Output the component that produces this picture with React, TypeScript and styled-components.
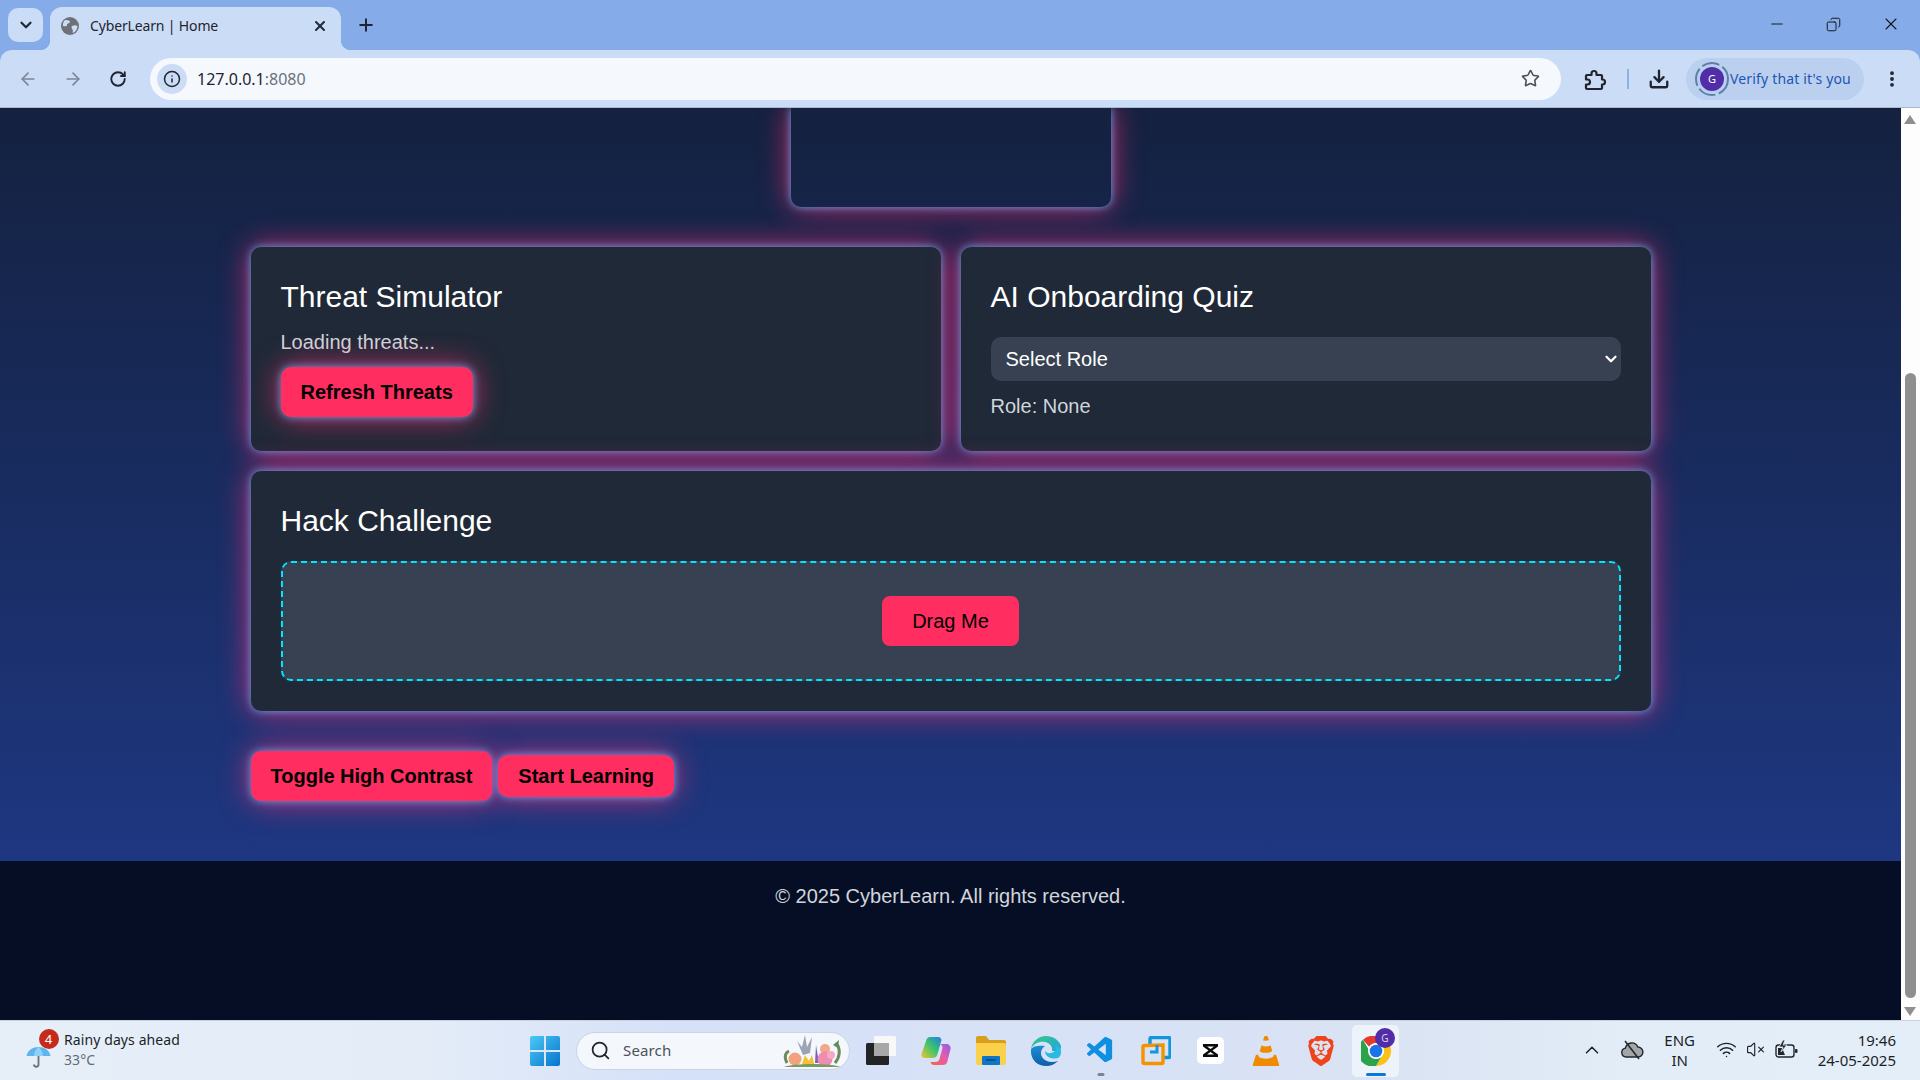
import React from "react";
import styled, { createGlobalStyle } from "styled-components";
import {
  ArrowLeft,
  ArrowRight,
  ChevronDown,
  ChevronUp,
  Copy,
  Download,
  EllipsisVertical,
  Info,
  Minus,
  Plus,
  RotateCw,
  Search,
  Star,
  VolumeX,
  Wifi,
  X,
} from "lucide-react";
import { VscVscode } from "react-icons/vsc";
import { SiBrave, SiVlcmediaplayer } from "react-icons/si";

const UI_FONT = `"Noto Sans", "Liberation Sans", sans-serif`;
const PAGE_FONT = `"Liberation Sans", Arial, sans-serif`;

const GlobalStyle = createGlobalStyle`
  html, body {
    margin: 0;
    padding: 0;
    height: 100%;
    overflow: hidden;
  }
  * {
    box-sizing: border-box;
  }
`;

const Screen = styled.div`
  width: 1920px;
  height: 1080px;
  display: flex;
  flex-direction: column;
  font-family: ${UI_FONT};
  overflow: hidden;
`;

/* browser chrome */

const TabStrip = styled.div`
  height: 50px;
  flex: none;
  background: #85ace9;
  display: flex;
  align-items: flex-end;
  padding-left: 8px;
`;

const TabListButton = styled.div`
  width: 35px;
  height: 34px;
  margin-bottom: 8px;
  border-radius: 10px;
  background: #cbdcf6;
  display: flex;
  align-items: center;
  justify-content: center;
  color: #1f2937;
`;

const Tab = styled.div`
  position: relative;
  width: 291px;
  height: 43px;
  margin-left: 7px;
  background: #cbdcf6;
  border-radius: 12px 12px 0 0;
  display: flex;
  align-items: center;
  padding: 0 13px 6px 11px;
  color: #1f2937;

  &::before,
  &::after {
    content: "";
    position: absolute;
    bottom: 0;
    width: 10px;
    height: 10px;
  }
  &::before {
    left: -10px;
    background: radial-gradient(circle at 0 0, transparent 10px, #cbdcf6 10.5px);
  }
  &::after {
    right: -10px;
    background: radial-gradient(circle at 100% 0, transparent 10px, #cbdcf6 10.5px);
  }
`;

const TabTitle = styled.span`
  flex: 1;
  margin-left: 11px;
  font-size: 14px;
  letter-spacing: -0.15px;
  color: #1f2430;
`;

const NewTab = styled.div`
  margin: 0 0 8px 8px;
  width: 34px;
  height: 34px;
  display: flex;
  align-items: center;
  justify-content: center;
  color: #1f2430;
`;

const WindowControls = styled.div`
  margin-left: auto;
  align-self: flex-start;
  display: flex;
  height: 48px;
  color: #14181f;
`;

const WindowButton = styled.div<{ $w: number }>`
  width: ${(p) => p.$w}px;
  display: flex;
  align-items: center;
  justify-content: center;
`;

const Toolbar = styled.div`
  height: 58px;
  flex: none;
  background: #85ace9;
  border-bottom: 1px solid #a9b9d2;
`;

const ToolbarInner = styled.div`
  height: 57px;
  background: #cbdcf6;
  border-radius: 12px 12px 0 0;
  display: flex;
  align-items: center;
  padding-left: 5px;
`;

const ToolSlot = styled.div<{ $w?: number; $dim?: boolean }>`
  width: ${(p) => p.$w ?? 45}px;
  height: 42px;
  flex: none;
  display: flex;
  align-items: center;
  justify-content: center;
  color: ${(p) => (p.$dim ? "#7d8794" : "#1f2430")};
`;

const AddressBar = styled.div`
  width: 1411px;
  height: 42px;
  margin: 0 9px 0 10px;
  flex: none;
  border-radius: 21px;
  background: #f5f8fd;
  display: flex;
  align-items: center;
  padding: 0 21px 0 7px;
  font-size: 16px;
`;

const InfoChip = styled.div`
  width: 30px;
  height: 30px;
  border-radius: 50%;
  background: #cbdcf6;
  display: flex;
  align-items: center;
  justify-content: center;
  color: #1f2430;
`;

const Host = styled.span`
  margin-left: 10px;
  color: #1f2430;
`;

const Port = styled.span`
  color: #6b7280;
  flex: 1;
`;

const ToolSeparator = styled.div`
  width: 2px;
  height: 20px;
  flex: none;
  margin: 0 12px 0 7px;
  background: #8db2e8;
`;

const VerifyChip = styled.div`
  width: 178px;
  height: 42px;
  margin-left: 9px;
  flex: none;
  border-radius: 21px;
  background: #bbd0ef;
  display: flex;
  align-items: center;
  padding-left: 8px;
  color: #1d55b3;
  font-size: 14px;
  letter-spacing: 0.17px;
`;

/* page */

const Viewport = styled.div`
  flex: 1;
  min-height: 0;
  display: flex;
`;

const PageArea = styled.div`
  flex: 1;
  min-width: 0;
  display: flex;
  flex-direction: column;
  overflow: hidden;
  font-family: ${PAGE_FONT};
  font-size: 20px;
`;

const Main = styled.main`
  flex: 1;
  background: linear-gradient(to bottom, #14213f 0%, #1e3781 100%);
  display: flex;
  flex-direction: column;
  align-items: center;
`;

const glow = `0 0 8px rgba(90, 185, 255, 0.85), 0 0 30px rgba(255, 45, 117, 0.8)`;

const HeroFrame = styled.div`
  width: 320px;
  height: 99px;
  flex: none;
  margin-bottom: 40px;
  border-radius: 0 0 10px 10px;
  box-shadow: ${glow};
`;

const Container = styled.div`
  width: 1400px;
  display: flex;
  flex-direction: column;
  gap: 20px;
`;

const CardRow = styled.div`
  display: grid;
  grid-template-columns: 1fr 1fr;
  gap: 20px;
`;

const Card = styled.section`
  background: #1f2937;
  border-radius: 10px;
  padding: 30px;
  box-shadow: ${glow};
`;

const CardTitle = styled.h2`
  margin: 2px 0 0;
  font-size: 30px;
  line-height: 36px;
  font-weight: 400;
  color: #fff;
`;

const CardText = styled.p<{ $top: number; $bottom?: number }>`
  margin: ${(p) => p.$top}px 0 ${(p) => p.$bottom ?? 0}px;
  line-height: 25px;
  color: #d1d5db;
`;

const GlowButton = styled.button<{ $tall?: boolean }>`
  height: ${(p) => (p.$tall ? 50 : 42)}px;
  padding: 0 20px;
  border: 0;
  border-radius: 10px;
  background: #ff2d60;
  color: #000;
  font-family: ${PAGE_FONT};
  font-size: 20px;
  font-weight: 700;
  box-shadow: ${glow};
`;

const CardAction = styled.div`
  margin: 12px 0 4px;
`;

const RoleSelect = styled.div`
  margin-top: 22px;
  height: 44px;
  border-radius: 10px;
  background: #374151;
  color: #fff;
  display: flex;
  align-items: center;
  justify-content: space-between;
  padding: 0 1px 0 15px;
`;

const DropZone = styled.div`
  margin-top: 22px;
  height: 120px;
  border: 2px dashed #00e5ff;
  border-radius: 10px;
  background: #374151;
  display: flex;
  align-items: center;
  justify-content: center;
`;

const DragChip = styled.div`
  width: 137px;
  height: 50px;
  border-radius: 8px;
  background: #ff2d60;
  color: #000;
  display: flex;
  align-items: center;
  justify-content: center;
`;

const ActionRow = styled.div`
  display: flex;
  align-items: center;
  gap: 6px;
  margin-top: 20px;
`;

const Footer = styled.footer`
  height: 159px;
  flex: none;
  background: #060e26;
  color: #d1d5db;
  text-align: center;
  padding-top: 23px;
  line-height: 25px;
`;

const Scrollbar = styled.div`
  width: 19px;
  flex: none;
  background: #fdfdfd;
  position: relative;
`;

const ScrollThumb = styled.div`
  position: absolute;
  left: 4px;
  top: 265px;
  width: 11px;
  height: 625px;
  border-radius: 6px;
  background: #8f8f8f;
`;

const ScrollArrow = styled.div<{ $down?: boolean }>`
  position: absolute;
  left: 3px;
  ${(p) => (p.$down ? "bottom: 4px;" : "top: 7px;")}
  width: 0;
  height: 0;
  border-left: 6.5px solid transparent;
  border-right: 6.5px solid transparent;
  ${(p) => (p.$down ? "border-top: 9px solid #8f8f8f;" : "border-bottom: 9px solid #8f8f8f;")}
`;

/* taskbar */

const Taskbar = styled.div`
  height: 60px;
  flex: none;
  border-top: 1px solid #c8d1dc;
  background: linear-gradient(to right, #e6eff8 0%, #e4ecf8 22%, #d5e1f8 35%, #d8e2f6 60%, #d9e3f3 72%, #e2edf7 85%, #e4eef8 100%);
  display: flex;
  align-items: center;
  color: #1b1f27;
`;

const Weather = styled.div`
  width: 528px;
  flex: none;
  display: flex;
  align-items: center;
  padding-left: 26px;
`;

const WeatherIcon = styled.div`
  position: relative;
  width: 38px;
  height: 44px;
  padding-bottom: 4px;
  display: flex;
  align-items: flex-end;
`;

const Badge = styled.span`
  position: absolute;
  top: 0;
  left: 12.5px;
  width: 20px;
  height: 20px;
  border-radius: 50%;
  background: #c42b1c;
  color: #fff;
  font-size: 13px;
  display: flex;
  align-items: center;
  justify-content: center;
`;

const WeatherLines = styled.div`
  padding-bottom: 2px;
  font-size: 14px;
  line-height: 20px;
  letter-spacing: 0.1px;
`;

const Muted = styled.div`
  color: #5f6b76;
`;

const Dock = styled.div`
  display: flex;
  align-items: center;
`;

const StartSlot = styled.div`
  width: 48px;
  display: flex;
  justify-content: flex-start;
  padding-left: 2px;
`;

const SearchPill = styled.div`
  position: relative;
  width: 274px;
  height: 38px;
  margin-right: 3px;
  border-radius: 19px;
  background: #f4f7fc;
  border: 1px solid #c9d4e4;
  display: flex;
  align-items: center;
  padding-left: 13px;
  color: #1f2430;
  font-size: 15px;
  letter-spacing: 0.15px;
`;

const SearchText = styled.span`
  margin: 0 0 2px 12px;
  color: #4b5058;
`;

const DockSlot = styled.div<{ $active?: boolean }>`
  position: relative;
  width: 55px;
  height: 52px;
  flex: none;
  display: flex;
  align-items: center;
  justify-content: center;
  ${(p) => p.$active && "background: rgba(255, 255, 255, 0.55); border-radius: 5px; width: 47px; margin-left: 4px;"}
`;

const RunDot = styled.span<{ $active?: boolean }>`
  position: absolute;
  bottom: 1px;
  left: 50%;
  transform: translateX(-50%);
  height: 3px;
  border-radius: 2px;
  width: ${(p) => (p.$active ? 20 : 7)}px;
  background: ${(p) => (p.$active ? "#0a78d4" : "#7d8490")};
`;

const ChromeBadge = styled.span`
  position: absolute;
  top: 3px;
  right: 4px;
  width: 20px;
  height: 20px;
  border-radius: 50%;
  background: #512da8;
  color: #d9d2ee;
  font-size: 10px;
  display: flex;
  align-items: center;
  justify-content: center;
`;

const Tray = styled.div`
  margin-left: auto;
  display: flex;
  align-items: center;
  padding: 0 24px 2px 0;
  font-size: 15px;
  line-height: 20px;
`;

const TraySlot = styled.div<{ $w: number }>`
  width: ${(p) => p.$w}px;
  display: flex;
  justify-content: center;
  align-items: center;
  text-align: center;
`;

const Clock = styled.div`
  text-align: right;
  margin-left: 14px;
`;

/* drawn icons */

const Favicon = () => (
  <svg width="18" height="18" viewBox="0 0 18 18">
    <circle cx="9" cy="9" r="9" fill="#6d7178" />
    <path d="M4 3c2 0 4 0 5 1.500 0 2-3 1.500-3 3.500s-2 1-4 1C1.500 7 2.500 4.500 4 3z" fill="#cbdcf6" />
    <path d="M11 9c2-1 4-1 5.500 0 0 3-2 6-4.500 7-1-1 .5-2-.5-3.500C10.500 11 10 10 11 9z" fill="#cbdcf6" />
  </svg>
);

const ExtensionIcon = () => (
  <svg width="24" height="24" viewBox="0 0 24 24" fill="none" stroke="currentColor" strokeWidth="2.200" strokeLinejoin="round">
    <path d="M3 9a1 1 0 0 1 1-1h4.500V6.500a2.500 2.500 0 0 1 5 0V8H18a1 1 0 0 1 1 1v3.500h.5a2.500 2.500 0 0 1 0 5H19V21a1 1 0 0 1-1 1H4a1 1 0 0 1-1-1v-3.500h1.500a2.500 2.500 0 0 0 0-5H3z" />
  </svg>
);

const ProfileIcon = () => (
  <svg width="36" height="36" viewBox="0 0 36 36">
    <circle cx="18" cy="18" r="16" fill="none" stroke="#5f7fae" strokeWidth="2" strokeDasharray="18 3.500" />
    <circle cx="18" cy="18" r="12" fill="#512da8" />
    <text x="18" y="22" textAnchor="middle" fontSize="11" fill="#fff" fontFamily="Noto Sans, sans-serif">
      G
    </text>
  </svg>
);

const Umbrella = () => (
  <svg width="25" height="25" viewBox="0 0 25 25">
    <path d="M12.500 7v13.500c0 3-4.500 3-4.500 0" stroke="#6b6f76" strokeWidth="1.800" fill="none" />
    <path d="M.5 12C1.500 6 7 3 12.500 3S23.500 6 24.500 12z" fill="#5fb4ee" />
    <path d="M8 12c0-4 2-7 4.500-9 2.500 2 4.500 5 4.500 9z" fill="#8fd0f7" />
  </svg>
);

const WindowsLogo = () => (
  <svg width="30" height="30" viewBox="0 0 30 30">
    <defs>
      <linearGradient id="win" x1="0" y1="0" x2="1" y2="1">
        <stop offset="0" stopColor="#4cc9f5" />
        <stop offset="1" stopColor="#0674cf" />
      </linearGradient>
    </defs>
    <path d="M2 0h12v14H0V2a2 2 0 0 1 2-2zM16 0h12a2 2 0 0 1 2 2v12H16zM0 16h14v14H2a2 2 0 0 1-2-2zM16 16h14v12a2 2 0 0 1-2 2H16z" fill="url(#win)" />
  </svg>
);

const Flowers = () => (
  <svg width="62" height="36" viewBox="0 0 62 36" style={{ position: "absolute", right: 6, bottom: 0 }}>
    <path d="M6 30C3 24 4 20 8 18M54 30c5-6 6-14 1-20" stroke="#6f8a5a" strokeWidth="3" fill="none" />
    <path d="M22 22l-6-14 5 6 3-12 2 12 5-10-2 16z" fill="#9ca3b5" />
    <path d="M34 30l1-18 3 18z" fill="#7b62b8" />
    <circle cx="14" cy="26" r="6.500" fill="#f2a27c" />
    <circle cx="44" cy="16" r="5" fill="#f3a788" />
    <path d="M20 34l4-12 4 6 3-6 3 12z" fill="#f2c230" />
    <circle cx="44" cy="26" r="7.500" fill="#ee8db1" />
    <circle cx="50" cy="22" r="4" fill="#f4a9c4" />
    <path d="M52 12l6-5-1 8z" fill="#5f8b55" />
    <path d="M3 34c8-4 50-4 56 0z" fill="#7a9a62" />
  </svg>
);

const TaskView = () => (
  <svg width="30" height="29" viewBox="0 0 30 29">
    <rect x="0" y="7" width="23" height="22" rx="1.500" fill="#242424" />
    <rect x="8" y="0" width="22" height="20" rx="1.500" fill="#f8f8f8" />
    <rect x="8" y="7" width="15" height="13" fill="#a8a8a8" />
  </svg>
);

const Copilot = () => (
  <svg width="30" height="30" viewBox="0 0 30 30">
    <defs>
      <linearGradient id="copA" x1="0" y1="1" x2="1" y2="0">
        <stop offset="0" stopColor="#f5c42c" />
        <stop offset=".5" stopColor="#3fc46a" />
        <stop offset="1" stopColor="#1d7fe0" />
      </linearGradient>
      <linearGradient id="copB" x1="0" y1="1" x2="1" y2="0">
        <stop offset="0" stopColor="#f4683c" />
        <stop offset=".55" stopColor="#e45bb0" />
        <stop offset="1" stopColor="#8a5fe8" />
      </linearGradient>
    </defs>
    <path d="M9 1h8c2 0 3 1 3.500 3l-4 14c-.8 3-2.500 4-5 4H4c-3 0-4-2-3.500-4L5 5c.7-2.500 2-4 4-4z" fill="url(#copA)" />
    <path d="M18 8h7c3 0 5 2 4.500 5l-3 12c-.7 3-2.500 4-5 4H13c-2 0-3-1-3.500-3h5c2 0 3.500-1 4-3l3-11c.3-2-1.500-4-3.500-4z" fill="url(#copB)" />
  </svg>
);

const FolderIcon = () => (
  <svg width="30" height="29" viewBox="0 0 30 29">
    <path d="M0 2a2 2 0 0 1 2-2h8l3 4h15a2 2 0 0 1 2 2v4H0z" fill="#d99f1c" />
    <path d="M0 7h28a2 2 0 0 1 2 2v18a2 2 0 0 1-2 2H2a2 2 0 0 1-2-2z" fill="#fbd04a" />
    <rect x="6" y="20" width="18" height="9" rx="1" fill="#0f76c6" />
    <rect x="10" y="23" width="10" height="2" fill="#0a4f8f" />
  </svg>
);

const EdgeIcon = () => (
  <svg width="30" height="30" viewBox="0 0 30 30">
    <defs>
      <linearGradient id="edgeA" x1="0" y1="0" x2="1" y2="1">
        <stop offset="0" stopColor="#37c88a" />
        <stop offset="1" stopColor="#1fa6dc" />
      </linearGradient>
      <linearGradient id="edgeB" x1="0" y1="0" x2="0" y2="1">
        <stop offset="0" stopColor="#1c8fd6" />
        <stop offset="1" stopColor="#0d5fa8" />
      </linearGradient>
    </defs>
    <path d="M15 0C7 0 1 6 0 13c3-6 9-8 14-7 5 1 8 5 7 9h8c1-2 1-4 1-5C28 4 22 0 15 0z" fill="url(#edgeA)" />
    <path d="M0 13C-1 23 6 30 15 30c5 0 9-2 12-5-6 2-13 1-16-4-2-4-1-8 3-11-6-1-12 0-14 3z" fill="url(#edgeB)" />
    <path d="M30 16c0-3-2-6-6-7 2 3 1 7-4 8-3 .5-5-.5-6-2 0 6 7 9 13 7 2-1 3-3 3-6z" fill="#2ab9e0" />
  </svg>
);

const VmwareIcon = () => (
  <svg width="30" height="30" viewBox="0 0 30 30" fill="none">
    <path d="M9 8V3a1.500 1.500 0 0 1 1.500-1.500h17A1.500 1.500 0 0 1 29 3v17a1.500 1.500 0 0 1-1.500 1.500H22" stroke="#1296db" strokeWidth="3.400" />
    <path d="M22 9v17a1.500 1.500 0 0 1-1.500 1.500h-17A1.500 1.500 0 0 1 2 26V11a1.500 1.500 0 0 1 1.500-1.500z" stroke="#f59200" strokeWidth="3.400" />
    <path d="M9 16h7V9" stroke="#1296db" strokeWidth="3" />
  </svg>
);

const CapcutIcon = () => (
  <svg width="27" height="27" viewBox="0 0 27 27">
    <rect width="27" height="27" rx="5" fill="#fff" />
    <path d="M6 7h15v2.500L15.500 13.500 21 17.500V20H6v-2.500L11.500 13.500 6 9.500z" fill="#0b0b0b" />
    <path d="M10 9.500h7l-3.500 2.500zM10 17.500h7L13.500 15z" fill="#fff" />
  </svg>
);

const ChromeIcon = () => (
  <svg width="30" height="30" viewBox="0 0 30 30">
    <circle cx="15" cy="15" r="15" fill="#fff" />
    <path d="M15 0a15 15 0 0 1 13 7.500H15a7.500 7.500 0 0 0-6.500 3.750L2 3.800A15 15 0 0 1 15 0z" fill="#e33b2e" />
    <path d="M28 7.500A15 15 0 0 1 15 30l6.500-11.250a7.500 7.500 0 0 0 0-7.500z" fill="#fbc116" />
    <path d="M15 30A15 15 0 0 1 2 3.800l6.500 11.250A7.500 7.500 0 0 0 15 22.500c2.500 0 5-1.200 6.500-3.750z" fill="#2ca24c" />
    <circle cx="15" cy="15" r="8" fill="#fff" />
    <circle cx="15" cy="15" r="6.300" fill="#1a73e8" />
  </svg>
);

const SyncOffCloud = () => (
  <svg width="24" height="22" viewBox="0 0 24 22">
    <path d="M6 18a4.500 4.500 0 0 1-.6-8.900A6.500 6.500 0 0 1 17.800 8 5 5 0 0 1 18 18z" fill="#a3a5a6" stroke="#23262b" strokeWidth="1.400" />
    <path d="M5 2l14 18" stroke="#23262b" strokeWidth="1.500" />
  </svg>
);

const BatteryIcon = () => (
  <svg width="24" height="20" viewBox="0 0 24 20" fill="none">
    <rect x="1" y="5" width="18" height="12" rx="2.500" stroke="#23262b" strokeWidth="1.400" />
    <rect x="20" y="9" width="2.500" height="4" rx="1" fill="#23262b" />
    <path d="M3 15V8h4l3 7z" fill="#23262b" />
    <path d="M8 0L4 7h4l-2 5 6-7H8l2-5z" fill="#23262b" stroke="#e2edf7" strokeWidth=".8" />
  </svg>
);

const App: React.FC = () => {
  return (
    <Screen>
      <GlobalStyle />
      <TabStrip>
        <TabListButton>
          <ChevronDown size={18} strokeWidth={3} />
        </TabListButton>
        <Tab>
          <Favicon />
          <TabTitle>CyberLearn | Home</TabTitle>
          <X size={16} strokeWidth={3} />
        </Tab>
        <NewTab>
          <Plus size={20} strokeWidth={2.4} />
        </NewTab>
        <WindowControls>
          <WindowButton $w={56}>
            <Minus size={18} strokeWidth={1.3} />
          </WindowButton>
          <WindowButton $w={56}>
            <Copy size={15} strokeWidth={1.6} style={{ transform: "scaleX(-1)" }} />
          </WindowButton>
          <WindowButton $w={59}>
            <X size={20} strokeWidth={1.3} />
          </WindowButton>
        </WindowControls>
      </TabStrip>

      <Toolbar>
        <ToolbarInner>
          <ToolSlot $dim>
            <ArrowLeft size={20} />
          </ToolSlot>
          <ToolSlot $dim>
            <ArrowRight size={20} />
          </ToolSlot>
          <ToolSlot>
            <RotateCw size={18} strokeWidth={2.5} />
          </ToolSlot>
          <AddressBar>
            <InfoChip>
              <Info size={18} strokeWidth={2} />
            </InfoChip>
            <Host>127.0.0.1</Host>
            <Port>:8080</Port>
            <Star size={19} strokeWidth={2} color="#4a4f58" />
          </AddressBar>
          <ToolSlot $w={50}>
            <ExtensionIcon />
          </ToolSlot>
          <ToolSeparator />
          <ToolSlot $w={36}>
            <Download size={22} strokeWidth={2.5} />
          </ToolSlot>
          <VerifyChip>
            <ProfileIcon />
            Verify that it's you
          </VerifyChip>
          <ToolSlot $w={56}>
            <EllipsisVertical size={20} strokeWidth={2.6} />
          </ToolSlot>
        </ToolbarInner>
      </Toolbar>

      <Viewport>
        <PageArea>
          <Main>
            <HeroFrame />
            <Container>
              <CardRow>
                <Card>
                  <CardTitle>Threat Simulator</CardTitle>
                  <CardText $top={15}>Loading threats...</CardText>
                  <CardAction>
                    <GlowButton $tall>Refresh Threats</GlowButton>
                  </CardAction>
                </Card>
                <Card>
                  <CardTitle>AI Onboarding Quiz</CardTitle>
                  <RoleSelect>
                    Select Role
                    <ChevronDown size={18} strokeWidth={3} />
                  </RoleSelect>
                  <CardText $top={13} $bottom={2}>
                    Role: None
                  </CardText>
                </Card>
              </CardRow>
              <Card>
                <CardTitle>Hack Challenge</CardTitle>
                <DropZone>
                  <DragChip>Drag Me</DragChip>
                </DropZone>
              </Card>
              <ActionRow>
                <GlowButton $tall>Toggle High Contrast</GlowButton>
                <GlowButton>Start Learning</GlowButton>
              </ActionRow>
            </Container>
          </Main>
          <Footer>© 2025 CyberLearn. All rights reserved.</Footer>
        </PageArea>
        <Scrollbar>
          <ScrollArrow />
          <ScrollThumb />
          <ScrollArrow $down />
        </Scrollbar>
      </Viewport>

      <Taskbar>
        <Weather>
          <WeatherIcon>
            <Umbrella />
            <Badge>4</Badge>
          </WeatherIcon>
          <WeatherLines>
            <div>Rainy days ahead</div>
            <Muted>33°C</Muted>
          </WeatherLines>
        </Weather>
        <Dock>
          <StartSlot>
            <WindowsLogo />
          </StartSlot>
          <SearchPill>
            <Search size={21} strokeWidth={2} />
            <SearchText>Search</SearchText>
            <Flowers />
          </SearchPill>
          <DockSlot>
            <TaskView />
          </DockSlot>
          <DockSlot>
            <Copilot />
          </DockSlot>
          <DockSlot>
            <FolderIcon />
          </DockSlot>
          <DockSlot>
            <EdgeIcon />
          </DockSlot>
          <DockSlot>
            <VscVscode size={31} color="#0f8fe0" />
            <RunDot />
          </DockSlot>
          <DockSlot>
            <VmwareIcon />
          </DockSlot>
          <DockSlot>
            <CapcutIcon />
          </DockSlot>
          <DockSlot>
            <SiVlcmediaplayer size={30} color="#f08a00" />
          </DockSlot>
          <DockSlot>
            <SiBrave size={30} color="#f1431a" />
          </DockSlot>
          <DockSlot $active>
            <ChromeIcon />
            <ChromeBadge>G</ChromeBadge>
            <RunDot $active />
          </DockSlot>
        </Dock>
        <Tray>
          <TraySlot $w={48}>
            <ChevronUp size={22} strokeWidth={1.6} />
          </TraySlot>
          <TraySlot $w={32}>
            <SyncOffCloud />
          </TraySlot>
          <TraySlot $w={64}>
            ENG
            <br />
            IN
          </TraySlot>
          <TraySlot $w={30}>
            <Wifi size={21} strokeWidth={1.7} />
          </TraySlot>
          <TraySlot $w={28}>
            <VolumeX size={19} strokeWidth={1.4} />
          </TraySlot>
          <TraySlot $w={34}>
            <BatteryIcon />
          </TraySlot>
          <Clock>
            19:46
            <br />
            24-05-2025
          </Clock>
        </Tray>
      </Taskbar>
    </Screen>
  );
};

export default App;
